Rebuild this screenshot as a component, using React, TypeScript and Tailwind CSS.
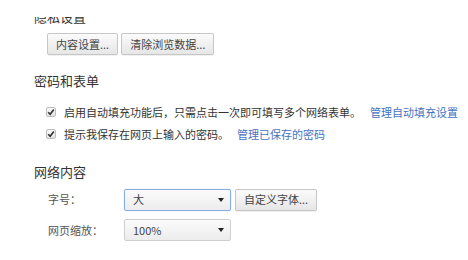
import React from "react";

const font = { fontFamily: '"Noto Sans CJK SC", "Noto Sans", sans-serif' };

const Button = ({ children }: { children: React.ReactNode }) => (
  <button className="h-[22px] px-[8px] rounded-[2px] border border-[#c6c6c6] bg-gradient-to-b from-[#fbfbfb] to-[#e6e6e6] text-[11px] leading-none text-[#444] shadow-[0_1px_0_rgba(0,0,0,0.06)]">
    {children}
  </button>
);

const Check = () => (
  <span className="flex items-center justify-center w-[10px] h-[10px] rounded-[2px] border border-[#bdbdbd] bg-gradient-to-b from-[#fafafa] to-[#e4e4e4]">
    <svg width="8" height="8" viewBox="0 0 8 8">
      <path d="M1.2 4.2 L3.2 6.2 L6.8 1.4" fill="none" stroke="#333" strokeWidth="1.6" />
    </svg>
  </span>
);

const Select = ({ value, focused }: { value: string; focused?: boolean }) => (
  <div
    className={`flex items-center justify-between w-[107px] h-[22px] pl-[8px] pr-[6px] rounded-[2px] border bg-gradient-to-b from-[#fbfbfb] to-[#ececec] text-[11px] text-[#444] ${
      focused ? "border-[#86aee6] shadow-[0_0_1px_#9cc0f0]" : "border-[#cfcfcf]"
    }`}
  >
    <span>{value}</span>
    <svg width="6" height="4" viewBox="0 0 6 4">
      <path d="M0 0 L6 0 L3 4 Z" fill="#222" />
    </svg>
  </div>
);

export default function App() {
  return (
    <div className="relative w-[468px] h-[260px] overflow-hidden bg-white text-[#333]" style={font}>
      {/* fixed header covering the top of the page */}
      <div className="absolute top-0 left-0 w-full h-[17px] bg-white z-10" />

      <div className="pl-[34px] pt-[8px]">
        <h3 className="text-[13px] leading-[18px] text-[#333]">隐私设置</h3>
        <div className="flex gap-[3px] mt-[7px] ml-[13px]">
          <Button>内容设置...</Button>
          <Button>清除浏览数据...</Button>
        </div>

        <h3 className="mt-[17px] text-[13px] leading-[18px] text-[#333]">密码和表单</h3>
        <div className="mt-[11px] ml-[12px] flex flex-col">
          <div className="flex items-center h-[22px] text-[11px]">
            <Check />
            <span className="ml-[8px]">启用自动填充功能后，只需点击一次即可填写多个网络表单。</span>
            <a className="ml-[9px] text-[#4672c2]">管理自动填充设置</a>
          </div>
          <div className="flex items-center h-[22px] text-[11px]">
            <Check />
            <span className="ml-[8px]">提示我保存在网页上输入的密码。</span>
            <a className="ml-[8px] text-[#4672c2]">管理已保存的密码</a>
          </div>
        </div>

        <h3 className="mt-[18px] text-[13px] leading-[18px] text-[#333]">网络内容</h3>
        <div className="mt-[7px] ml-[14px] flex flex-col gap-[8px]">
          <div className="flex items-center h-[23px] text-[11px]">
            <span className="w-[76px] text-[#555]">字号：</span>
            <Select value="大" focused />
            <div className="ml-[4px]">
              <Button>自定义字体...</Button>
            </div>
          </div>
          <div className="flex items-center h-[22px] text-[11px]">
            <span className="w-[76px] text-[#555]">网页缩放：</span>
            <Select value="100%" />
          </div>
        </div>
      </div>
    </div>
  );
}
